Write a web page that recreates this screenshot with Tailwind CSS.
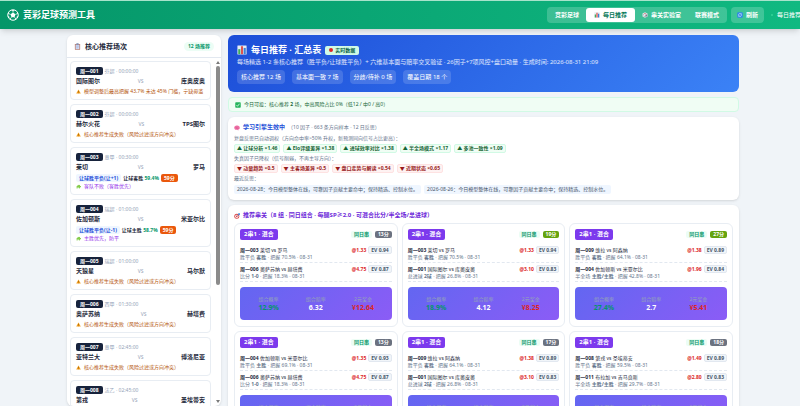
<!DOCTYPE html>
<html lang="zh-CN">

<head>
  <meta charset="UTF-8">
  <title>竞彩足球预测工具</title>
  <meta name="viewport" content="width=device-width, initial-scale=1.0">
  <script src="https://cdn.jsdelivr.net/npm/@tailwindcss/browser@4"></script>
</head>

<body class="h-screen flex flex-col overflow-hidden bg-[#f0f4f8] font-['Noto_Sans','Noto_Sans_CJK_SC',sans-serif] text-[5px] leading-[7px] text-[#1e293b]">

  <!-- Icons -->
  <svg class="hidden">
    <symbol id="i-ball" viewBox="0 0 24 24">
      <circle cx="12" cy="12" r="10.5" fill="none" stroke="#fff" stroke-width="2" />
      <path d="M12 7l5 3.7-1.9 5.8H8.900L7 10.700z" fill="#fff" />
      <path d="M12 7V2M17 10.700l5-2M15.100 16.500l3 4M8.900 16.500l-3 4M7 10.700l-5-2" stroke="#fff" stroke-width="1.600" />
      <path d="M8.500 1.800L12 4.200l3.500-2.400zM1.500 14l3 1 .5 4zM22.500 14l-3 1-.5 4z" fill="#fff" />
    </symbol>
    <symbol id="i-clip" viewBox="0 0 24 24">
      <rect x="3" y="3" width="18" height="20" rx="2" fill="#b7796a" />
      <rect x="5.500" y="6" width="13" height="15" fill="#d3dcf5" />
      <rect x="8" y="1" width="8" height="5" rx="1" fill="#7c8db5" />
      <path d="M8 10h8M8 13.500h8M8 17h6" stroke="#8fa3d6" stroke-width="1.500" />
    </symbol>
    <symbol id="i-chart" viewBox="0 0 24 24">
      <rect x="1" y="1" width="22" height="22" rx="1" fill="#e8eef5" />
      <rect x="3" y="10" width="5" height="12" fill="#3fae5a" />
      <rect x="9.500" y="3" width="5" height="19" fill="#e0524d" />
      <rect x="16" y="7" width="5" height="15" fill="#3b82d9" />
    </symbol>
    <symbol id="i-dice" viewBox="0 0 24 24">
      <path d="M12 1l10 5v12l-10 5L2 18V6z" fill="#dfe5ea" />
      <path d="M12 11v12l10-5V6z" fill="#a9b3bd" />
      <circle cx="12" cy="6" r="2.200" fill="#d33a3a" />
      <circle cx="5.500" cy="11" r="1.500" fill="#555" />
      <circle cx="8.500" cy="17" r="1.500" fill="#555" />
      <circle cx="17" cy="14" r="1.700" fill="#444" />
    </symbol>
    <symbol id="i-refresh" viewBox="0 0 24 24">
      <rect x="1" y="1" width="22" height="22" rx="4" fill="#2f86e8" />
      <path d="M6 11a6 6 0 0 1 11-2M18 13a6 6 0 0 1-11 2" fill="none" stroke="#fff" stroke-width="2.200" />
      <path d="M18.500 5v5h-5zM5.500 19v-5h5z" fill="#fff" />
    </symbol>
    <symbol id="i-warn" viewBox="0 0 24 24">
      <path d="M12 2l11 20H1z" fill="#f59e1b" />
      <path d="M12 9v7M12 18v2.200" stroke="#5b3a0a" stroke-width="2.200" />
    </symbol>
    <symbol id="i-puzzle" viewBox="0 0 24 24">
      <path d="M3 9h5a3 3 0 1 1 5-3l5-2 2 6a3 3 0 1 1 0 5l-2 6-5-1a3 3 0 1 0-5 1H3z" fill="#84cc4a" />
    </symbol>
    <symbol id="i-check" viewBox="0 0 24 24">
      <rect x="1" y="1" width="22" height="22" rx="3" fill="#27b45d" />
      <path d="M6 12.500l4 4.500 8-10" fill="none" stroke="#fff" stroke-width="3" />
    </symbol>
    <symbol id="i-brain" viewBox="0 0 24 24">
      <path d="M1 12c-1-6 4-10 10-10 7-1 12 3 12 9 0 4-2 6-5 6l-1 5-4-3c-6 1-11 0-12-7z" fill="#ee6fa5" />
      <path d="M6 10c3-2 5 1 8-1M8 14c3 1 6-2 10 0" fill="none" stroke="#c74580" stroke-width="1.500" />
    </symbol>
    <symbol id="i-target" viewBox="0 0 24 24">
      <circle cx="11" cy="13" r="10" fill="#dc4b4b" />
      <circle cx="11" cy="13" r="6.500" fill="#fff" />
      <circle cx="11" cy="13" r="3.500" fill="#dc4b4b" />
      <path d="M11 13l9-9M17 3l1 4 4 1 2-4-3-3z" fill="#3b82d9" stroke="#3b82d9" stroke-width="1.800" />
    </symbol>
  </svg>

  <!-- Header -->
  <header class="shrink-0 h-[29px] flex items-center pl-[7px] border-t border-[#a7e3cb] bg-linear-to-r/srgb from-[#059669] to-[#10b981] shadow-md text-white text-[6px] leading-[8px] font-bold whitespace-nowrap">
    <svg class="size-[12px] mr-[4px]"><use href="#i-ball" /></svg>
    <h1 class="text-[9px] leading-[12px] mr-auto">竞彩足球预测工具</h1>
    <nav class="flex items-center p-px rounded bg-white/20 mr-[4px]">
      <button class="px-[7px] py-[3px]">竞彩足球</button>
      <button class="flex items-center gap-[3px] px-[8px] py-[3px] rounded-[3px] bg-white text-[#047857]"><svg class="size-[6px]"><use href="#i-chart" /></svg>每日推荐</button>
      <button class="flex items-center gap-[3px] px-[7px] py-[3px]"><svg class="size-[6px]"><use href="#i-dice" /></svg>串关实验室</button>
      <button class="px-[7px] py-[3px]">联赛模式</button>
    </nav>
    <button class="flex items-center gap-[3px] px-[6px] py-[4px] rounded bg-white/20 mr-[7px]"><svg class="size-[6px]"><use href="#i-refresh" /></svg>刷新</button>
    <div class="flex items-center gap-[4px] w-[29px] font-normal">
      <span class="shrink-0 size-[2px] rounded-full bg-[#34d399]"></span>
      <span>每日推荐</span>
    </div>
  </header>

  <div class="flex-1 min-h-0 pl-[6px] pt-[6px]">
    <div class="h-full max-w-[672px] mx-auto flex gap-[7px]">

      <!-- Sidebar -->
      <aside class="w-[154px] shrink-0 flex flex-col rounded-md bg-white shadow-sm">
        <div class="shrink-0 flex items-center justify-between h-[23px] px-[7px] border-b border-[#e2e8f0]">
          <h2 class="flex items-center gap-[4px] text-[7px] leading-[9px] font-bold"><svg class="size-[7px]"><use href="#i-clip" /></svg>核心推荐场次</h2>
          <span class="px-[4px] py-px rounded-full bg-[#ecfdf5] text-[#059669] font-bold">12 场推荐</span>
        </div>
        <div class="flex-1 min-h-0 flex">
          <div id="matches" class="flex-1 min-w-0 flex flex-col gap-[4px] pl-[3px] pr-[4px] pt-[3px] overflow-hidden"></div>
          <div class="w-[6px] flex flex-col items-center py-[3px]">
            <svg class="w-[4px] h-[3px]" viewBox="0 0 4 3"><path d="M2 0l2 3H0z" fill="#7a7a7a" /></svg>
            <div class="w-[4px] mt-[2px] h-[64%] rounded-full bg-[#8b8b8b]"></div>
            <svg class="w-[4px] h-[3px] mt-auto" viewBox="0 0 4 3"><path d="M2 3L0 0h4z" fill="#7a7a7a" /></svg>
          </div>
        </div>
      </aside>

      <main class="flex-1 min-w-0 flex flex-col gap-[5px]">
        <!-- Hero -->
        <section class="shrink-0 px-[9px] pt-[9px] pb-[8px] rounded-md bg-linear-135/srgb from-[#1d4ed8] to-[#3b82f6] text-white">
          <div class="flex items-center gap-[4px]">
            <svg class="size-[10px]"><use href="#i-chart" /></svg>
            <h2 class="text-[9px] leading-[12px] font-bold">每日推荐 · 汇总表</h2>
            <span class="flex items-center gap-[2px] px-[4px] py-px rounded-xs bg-[#d1fae5] text-[#065f46] font-bold"><i class="size-[4px] rounded-full bg-[#dc2626]"></i>实时数据</span>
          </div>
          <p class="mt-[2px] text-[6px] leading-[8px] text-white/85 whitespace-nowrap">每场精选 1-2 条核心推荐（胜平负/让球胜平负）+ 六维基本面与赔率交叉验证 · 26因子+7项风控+盘口动量 · 生成时间: 2026-08-31 21:09</p>
          <div class="flex gap-[7px] mt-[4px] text-[6px] leading-[8px]">
            <span class="px-[4px] py-[3px] rounded bg-white/15">核心推荐 12 场</span>
            <span class="px-[4px] py-[3px] rounded bg-white/15">基本面一致 7 场</span>
            <span class="px-[4px] py-[3px] rounded bg-white/15">分歧/待补 0 场</span>
            <span class="px-[4px] py-[3px] rounded bg-white/15">覆盖日期 18 个</span>
          </div>
        </section>

        <div class="shrink-0 flex items-center gap-[3px] h-[15px] px-[6px] rounded border border-[#d1fae5] bg-[#f0fdf4] text-[#166534]">
          <svg class="size-[6px]"><use href="#i-check" /></svg>
          <p>今日可投：核心推荐 <b>2</b> 场，中高风险占比 0%（低12 / 中0 / 高0）</p>
        </div>

        <!-- Learning engine -->
        <section class="shrink-0 p-[6px] rounded-md bg-white shadow-sm text-[#64748b]">
          <h3 class="flex items-center gap-[3px] text-[6px] leading-[9px] font-bold text-[#1d4ed8]"><svg class="size-[6px]"><use href="#i-brain" /></svg>学习引擎生效中<span class="text-[5px] font-normal text-[#64748b]">（10 因子 · 663 条方向样本 · 12 日反思）</span></h3>
          <p class="mt-[3px]">复盘反思已自动调权（方向命中率&gt;50% 升权，新预测同向信号占比更高）：</p>
          <div id="up" class="flex gap-[3px] mt-[2px]"></div>
          <p class="mt-[2px]">失真因子已降权（信号削弱，不再主导方向）：</p>
          <div id="down" class="flex gap-[3px] mt-[2px]"></div>
          <p class="mt-[2px]">最近反思：</p>
          <div class="flex gap-[3px] mt-[3px] whitespace-nowrap">
            <span class="px-[3px] py-px rounded-xs bg-[#eff6ff] text-[#475569]">2026-08-28：今日模型整体在线，可靠因子贡献主要命中；保持精选、控制水位。</span>
            <span class="px-[3px] py-px rounded-xs bg-[#eff6ff] text-[#475569]">2026-08-26：今日模型整体在线，可靠因子贡献主要命中；保持精选、控制水位。</span>
          </div>
        </section>

        <!-- Parlays -->
        <section class="shrink-0 p-[6px] rounded-md bg-white shadow-sm">
          <h3 class="flex items-center gap-[3px] text-[6px] leading-[9px] font-bold text-[#6d28d9]"><svg class="size-[6px]"><use href="#i-target" /></svg>推荐串关（8 组 · 同日组合 · 每腿SP≥2.0 · 可混合比分/半全场/总进球）</h3>
          <div id="combos" class="grid grid-cols-3 gap-[4px] mt-[3px]"></div>
        </section>
      </main>
    </div>
  </div>

  <script>
    const FAIL = "核心推荐生成失败（风险过滤或方向冲突）";
    const matches = [
      { no: "001", league: "芬超", time: "00:00:00", home: "国际图尔", away: "库奥皮奥", warn: "模型调整后最高把握 43.7% 未达 45% 门槛，宁缺毋滥" },
      { no: "002", league: "芬超", time: "00:00:00", home: "赫尔火花", away: "TPS图尔", warn: FAIL },
      { no: "003", league: "意甲", time: "00:30:00", home: "莱切", away: "罗马", bet: "让球胜平负(让+1)", pick: "让球客胜", rate: "59.4%", score: "59分", hint: "客队不败（客胜优先）" },
      { no: "004", league: "瑞超", time: "01:00:00", home: "佐加顿斯", away: "米亚尔比", bet: "让球胜平负(让-1)", pick: "让球主胜", rate: "58.7%", score: "59分", hint: "主胜优先，防平" },
      { no: "005", league: "瑞超", time: "01:00:00", home: "天狼星", away: "马尔默", warn: FAIL },
      { no: "006", league: "西甲", time: "01:30:00", home: "奥萨苏纳", away: "赫塔费", warn: FAIL },
      { no: "007", league: "意甲", time: "02:45:00", home: "亚特兰大", away: "博洛尼亚", warn: FAIL },
      { no: "008", league: "法乙", time: "02:45:00", home: "第戎", away: "圣埃蒂安", warn: FAIL },
    ];

    document.getElementById("matches").innerHTML = matches.map((m) => `
      <article class="shrink-0 px-[5px] pt-[5px] pb-[4px] rounded border border-[#e8edf3]">
        <div class="flex items-center gap-[2px] text-[#94a3b8]">
          <span class="px-[4px] leading-[8px] rounded-xs bg-[#17233c] text-white font-bold">周一${m.no}</span>
          <span>${m.league} · ${m.time}</span>
        </div>
        <div class="flex items-center justify-between mt-[2px] text-[6px] leading-[9px] font-bold">
          <span>${m.home}</span><span class="text-[5px] font-normal text-[#94a3b8]">VS</span><span>${m.away}</span>
        </div>
        ${m.bet ? `
        <div class="flex items-center gap-[2px] mt-[2px] leading-[8px] font-bold whitespace-nowrap">
          <span class="px-[3px] rounded-xs bg-[#eff6ff] text-[#1d4ed8]">${m.bet}</span>
          <span>${m.pick} <span class="text-[#059669]">${m.rate}</span></span>
          <span class="px-[3px] rounded-xs bg-[#ea580c] text-white">${m.score}</span>
        </div>
        <p class="flex items-center gap-[3px] mt-px text-[#9333ea]"><svg class="size-[5px]"><use href="#i-puzzle" /></svg>${m.hint}</p>` : `
        <p class="flex items-center gap-[3px] mt-[2px] text-[#b45309] whitespace-nowrap"><svg class="size-[5px]"><use href="#i-warn" /></svg>${m.warn}</p>`}
      </article>`).join("");

    const up = ["让球分析 ×1.46", "Elo评级差异 ×1.38", "进球效率对比 ×1.38", "半全场模式 ×1.17", "多池一致性 ×1.09"];
    const down = ["动量趋势 ×0.5", "主客场差异 ×0.5", "盘口走势与解读 ×0.54", "近期状态 ×0.65"];
    document.getElementById("up").innerHTML = up.map((t) =>
      `<span class="px-[2px] rounded-xs border border-[#d1fae5] bg-[#f0fdf4] text-[#166534] font-bold">▲ ${t}</span>`).join("");
    document.getElementById("down").innerHTML = down.map((t) =>
      `<span class="px-[2px] rounded-xs border border-[#fee2e2] bg-[#fef2f2] text-[#991b1b] font-bold">▼ ${t}</span>`).join("");

    const GRAY = "bg-[#6b7280]", GREEN = "bg-[#65a30d]";
    // leg: number, teams, odds, EV, market, pick, confidence
    const leg = {
      a: ["003", "莱切 vs 罗马", "1.33", "0.94", "胜平负", "客胜", "70.5%"],
      b: ["006", "奥萨苏纳 vs 赫塔费", "4.75", "0.87", "比分", "1-0", "18.3%"],
      c: ["001", "国际图尔 vs 库奥皮奥", "3.10", "0.83", "总进球", "2球", "26.8%"],
      d: ["009", "维拉 vs 阿森纳", "1.38", "0.89", "胜平负", "客胜", "64.1%"],
      e: ["004", "佐加顿斯 vs 米亚尔比", "1.96", "0.84", "半全场", "主胜/主胜", "42.8%"],
      f: ["004", "佐加顿斯 vs 米亚尔比", "1.35", "0.93", "胜平负", "主胜", "69.1%"],
      g: ["008", "第戎 vs 圣埃蒂安", "1.49", "0.89", "胜平负", "客胜", "59.5%"],
      h: ["011", "布拉加 vs 吉马良斯", "2.80", "0.83", "半全场", "主胜/主胜", "29.7%"],
    };
    const combos = [
      { score: 13, tone: GRAY, legs: [leg.a, leg.b], sum: ["12.9%", "6.32", "¥12.64"] },
      { score: 19, tone: GREEN, legs: [leg.a, leg.c], sum: ["18.9%", "4.12", "¥8.25"] },
      { score: 27, tone: GREEN, legs: [leg.d, leg.e], sum: ["27.4%", "2.7", "¥5.41"] },
      { score: 13, tone: GRAY, legs: [leg.f, leg.b], sum: ["12.6%", "6.41", "¥12.83"] },
      { score: 17, tone: GRAY, legs: [leg.d, leg.c], sum: ["17.2%", "4.28", "¥8.56"] },
      { score: 18, tone: GRAY, legs: [leg.g, leg.h], sum: ["17.7%", "4.17", "¥8.34"] },
    ];

    document.getElementById("combos").innerHTML = combos.map((c) => `
      <article class="px-[5px] pt-[5px] pb-[6px] rounded-md border border-[#e8edf3]">
        <div class="flex items-center gap-[3px] font-bold">
          <span class="px-[4px] py-px mr-auto rounded-xs bg-[#7c3aed] text-white text-[6px] leading-[9px]">2串1 · 混合</span>
          <span class="px-[3px] rounded-xs bg-[#ecfdf5] text-[#059669]">同日串</span>
          <span class="px-[3px] rounded-xs text-white ${c.tone}">${c.score}分</span>
        </div>
        <div class="mt-[4px]">
          ${c.legs.map(([no, teams, odds, ev, market, pick, conf]) => `
          <div class="py-[2px] border-b border-dashed border-[#e2e8f0]">
            <div class="flex items-center gap-[2px] leading-[8px]">
              <span class="mr-auto"><b>周一${no}</b> ${teams}</span>
              <b class="text-[#dc2626]">@${odds}</b>
              <b class="px-[2px] leading-[6px] rounded-xs border border-[#e2e8f0] bg-[#f1f5f9] text-[#475569]">EV ${ev}</b>
            </div>
            <p class="leading-[6px] text-[#64748b]">${market} <b>${pick}</b> · 把握 ${conf} · 08-31</p>
          </div>`).join("")}
        </div>
        <dl class="grid grid-cols-3 mt-[5px] px-[5px] pt-[9px] pb-[8px] rounded bg-linear-135/srgb from-[#6366f1] to-[#8b5cf6] text-center">
          <div><dt class="text-[#94a3b8]">组合概率</dt><dd class="text-[7px] leading-[9px] font-bold text-[#059669]">${c.sum[0]}</dd></div>
          <div><dt class="text-[#94a3b8]">组合赔率</dt><dd class="text-[7px] leading-[9px] font-bold text-white">${c.sum[1]}</dd></div>
          <div><dt class="text-[#94a3b8]">2元奖金</dt><dd class="text-[7px] leading-[9px] font-bold text-[#dc2626]">${c.sum[2]}</dd></div>
        </dl>
      </article>`).join("");
  </script>

</body>

</html>
